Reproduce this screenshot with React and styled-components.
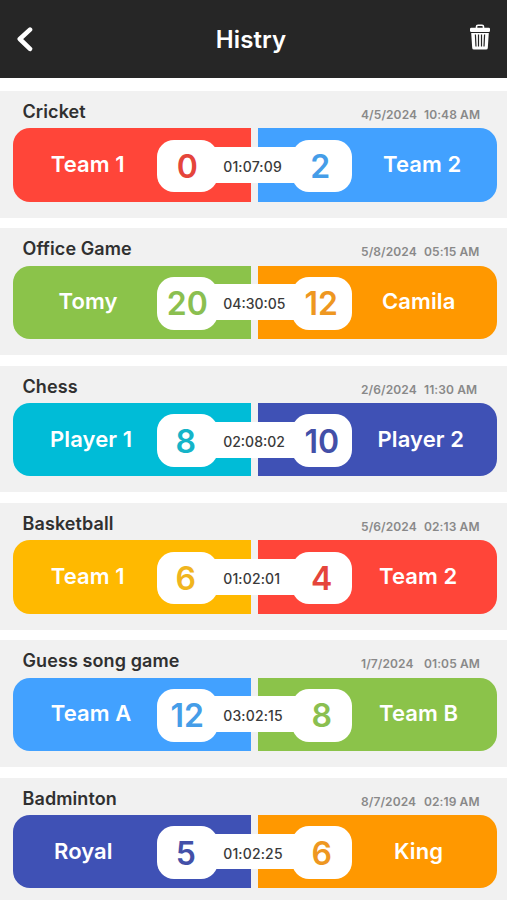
import styled, { createGlobalStyle } from "styled-components"

const GlobalStyle = createGlobalStyle`
body{
	margin: 0;
	background: #fff;
	overflow: hidden;
	font-family: Inter, "Liberation Sans", sans-serif;
}
`

const Screen = styled.div`
	height: 900px;
	overflow: hidden;
	background: #fff;
`

const Header = styled.header`
	display: grid;
	grid-template-columns: 60px 1fr 60px;
	align-items: center;
	box-sizing: border-box;
	height: 77.6px;
	background: #262626;
	color: #fff;

	h1{
		margin: 3px 0 0;
		padding-right: 5px;
		font-size: 24px;
		font-weight: 600;
		line-height: 30px;
		letter-spacing: .1px;
		text-align: center;
	}
`

const IconButton = styled.button`
	display: flex;
	justify-content: ${({ $end }) => ($end ? "flex-end" : "flex-start")};
	padding: 0 ${({ $end }) => ($end ? "16.5px 3px 0" : "0 0 16px")};
	border: 0;
	background: none;
	color: #fff;
`

const List = styled.main`
	display: flex;
	flex-direction: column;
	gap: 10.8px;
	padding-top: 13.6px;
`

const Card = styled.section`
	box-sizing: border-box;
	height: 126.5px;
	flex: none;
	padding: 9px 10.5px 0 12.5px;
	background: #f1f1f1;
`

const CardTop = styled.div`
	display: flex;
	justify-content: space-between;
	height: 28.3px;
	padding: 0 16px 0 10px;

	h2{
		margin: 1px 0 0;
		font-size: 18px;
		font-weight: 600;
		line-height: 22px;
		letter-spacing: .1px;
		color: #303030;
	}
	time{
		display: grid;
		grid-template-columns: 63px 56.5px;
		padding-top: 7px;
		font-size: 12px;
		font-weight: 600;
		line-height: 16px;
		letter-spacing: .1px;
		white-space: nowrap;
		color: #898989;
	}
`

const Board = styled.div`
	position: relative;
	display: flex;
	gap: 7px;
	height: 73.3px;
`

const Side = styled.div`
	display: flex;
	flex: 1;
	align-items: center;
	justify-content: ${({ $right }) => ($right ? "flex-start" : "space-between")};
	box-sizing: border-box;
	padding: ${({ $right }) => ($right ? "0 0 0 33.5px" : "0 33.5px 0 0")};
	border-radius: ${({ $right }) => ($right ? "0 17px 17px 0" : "17px 0 0 17px")};
	background: ${({ $color }) => $color};
`

const Name = styled.span`
	padding-left: ${({ $indent }) => $indent}px;
	padding-bottom: 2px;
	font-size: 22px;
	font-weight: 600;
	line-height: 30px;
	letter-spacing: .1px;
	white-space: nowrap;
	color: #fff;
`

const Score = styled.span`
	display: flex;
	flex: none;
	align-items: center;
	justify-content: center;
	box-sizing: border-box;
	width: 60.5px;
	height: 52.8px;
	margin-top: 1.8px;
	padding-top: 1px;
	padding-right: ${({ $shift }) => $shift || 0}px;
	border-radius: 17px;
	background: #fff;
	font-size: 32px;
	font-weight: 600;
	color: ${({ $color }) => $color};
`

const Timer = styled.span`
	position: absolute;
	top: 18.7px;
	left: 50%;
	box-sizing: border-box;
	width: 84px;
	height: 35.8px;
	margin-left: -42.3px;
	padding: 1px 0 0 11px;
	background: #fff;
	font-size: 14px;
	font-weight: 500;
	line-height: 37px;
	white-space: nowrap;
	color: #3a3a3a;
	letter-spacing: ${({ $tracking }) => $tracking}px;
`

const red = { bg: "#ff4539", ink: "#e5453b" }
const blue = { bg: "#42a1ff", ink: "#459de8" }
const green = { bg: "#8bc34a", ink: "#8bbf50" }
const orange = { bg: "#ff9800", ink: "#ee9721" }
const cyan = { bg: "#00bcd7", ink: "#15b4c8" }
const indigo = { bg: "#3f51b5", ink: "#4350a8" }
const yellow = { bg: "#ffb900", ink: "#f0b51e" }

const games = [
  { title: "Cricket", date: "4/5/2024", clock: "10:48 AM", time: "01:07:09", tracking: 0.15, left: ["Team 1", "0", red, 38.3], right: ["Team 2", "2", blue, 31, 3] },
  { title: "Office Game", date: "5/8/2024", clock: "05:15 AM", time: "04:30:05", tracking: 0, left: ["Tomy", "20", green, 46], right: ["Camila", "12", orange, 30, 1] },
  { title: "Chess", date: "2/6/2024", clock: "11:30 AM", time: "02:08:02", tracking: 0, left: ["Player 1", "8", cyan, 37.5, 3], right: ["Player 2", "10", indigo, 25.5] },
  { title: "Basketball", date: "5/6/2024", clock: "02:13 AM", time: "01:02:01", tracking: 0.15, left: ["Team 1", "6", yellow, 38.3, 3], right: ["Team 2", "4", red, 27] },
  { title: "Guess song game", date: "1/7/2024", clock: "01:05 AM", time: "03:02:15", tracking: 0.15, left: ["Team A", "12", blue, 38.3, -1], right: ["Team B", "8", green, 27] },
  { title: "Badminton", date: "8/7/2024", clock: "02:19 AM", time: "01:02:25", tracking: 0.15, left: ["Royal", "5", indigo, 41.5, 3], right: ["King", "6", orange, 42] },
]

const BackIcon = () => (
  <svg width="18" height="26" viewBox="0 0 18 26" fill="none" stroke="currentColor" strokeWidth="4.6" strokeLinecap="round" strokeLinejoin="round">
    <path d="M14 3.6 3.8 13 14 22.8" />
  </svg>
)

const TrashIcon = () => (
  <svg width="22" height="26" viewBox="0 0 22 26" fill="none">
    <path d="M7.5 4V2.7Q7.5 1.2 9 1.2h4q1.5 0 1.5 1.5V4" stroke="currentColor" strokeWidth="1.6" />
    <rect x="1" y="3.8" width="20" height="4.2" rx="1.2" fill="currentColor" />
    <path d="M2.2 9h17.6l-1 15q-.1 1.5-1.8 1.5H5q-1.7 0-1.8-1.5z" fill="currentColor" />
    <path d="M6.4 10.5 7 22.5M9.5 10.5v12M12.5 10.5v12M15.6 10.5 15 22.5" stroke="#262626" strokeWidth="1.2" />
  </svg>
)

const Game = ({ game }) => {
  const [leftName, leftScore, leftColor, leftIndent, leftShift] = game.left
  const [rightName, rightScore, rightColor, rightIndent, rightShift] = game.right
  return (
    <Card>
      <CardTop>
        <h2>{game.title}</h2>
        <time>
          <span>{game.date}</span>
          <span>{game.clock}</span>
        </time>
      </CardTop>
      <Board>
        <Side $color={leftColor.bg}>
          <Name $indent={leftIndent}>{leftName}</Name>
          <Score $color={leftColor.ink} $shift={leftShift}>{leftScore}</Score>
        </Side>
        <Side $right $color={rightColor.bg}>
          <Score $color={rightColor.ink} $shift={rightShift}>{rightScore}</Score>
          <Name $indent={rightIndent}>{rightName}</Name>
        </Side>
        <Timer $tracking={game.tracking}>{game.time}</Timer>
      </Board>
    </Card>
  )
}

const App = () => {
  return (
    <Screen>
      <GlobalStyle />
      <Header>
        <IconButton aria-label="Back"><BackIcon /></IconButton>
        <h1>Histry</h1>
        <IconButton $end aria-label="Delete"><TrashIcon /></IconButton>
      </Header>
      <List>
        {games.map((game) => <Game key={game.title} game={game} />)}
      </List>
    </Screen>
  )
}

export default App
